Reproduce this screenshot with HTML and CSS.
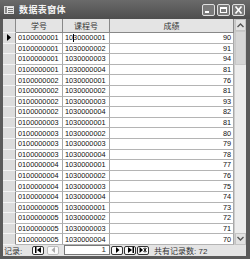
FILE: index.html
```html
<!DOCTYPE html>
<html lang="zh">
<head>
  <link rel="stylesheet" href="styles.css">
</head>
<body>
  <div class="window">
    <div class="titlebar">
      <svg class="app-icon" width="10" height="8" viewBox="0 0 10 8">
        <rect x="0.5" y="0.5" width="9" height="7" fill="#eee" stroke="#ddd"/>
        <rect x="1" y="1" width="2" height="6" fill="#888"/>
        <line x1="4" y1="2.5" x2="9" y2="2.5" stroke="#777"/>
        <line x1="4" y1="4.5" x2="9" y2="4.5" stroke="#777"/>
        <line x1="4" y1="6.5" x2="9" y2="6.5" stroke="#777"/>
      </svg>
      <span class="title">数据表窗体</span>
      <div class="title-btns">
        <span class="tbtn"><svg width="9" height="8" viewBox="0 0 9 8"><rect x="1" y="5" width="4" height="2" fill="#fff"/></svg></span>
        <span class="tbtn"><svg width="9" height="8" viewBox="0 0 9 8"><rect x="1.5" y="1.5" width="6" height="5" fill="none" stroke="#fff"/><rect x="1" y="1" width="7" height="2" fill="#fff"/></svg></span>
        <span class="tbtn"><svg width="9" height="8" viewBox="0 0 9 8"><path d="M1.5 0.5 L7.5 7.5 M7.5 0.5 L1.5 7.5" stroke="#fff" stroke-width="1.6"/></svg></span>
      </div>
    </div>

    <div class="frame">
      <div class="sheet">
        <div class="grid">
          <div class="cell sel head"></div>
          <div class="cell head">学号</div>
          <div class="cell head">课程号</div>
          <div class="cell head">成绩</div>

          <div class="cell sel"><svg width="4" height="7" viewBox="0 0 4 7"><path d="M0 0 L4 3.5 L0 7 Z" fill="#000"/></svg></div>
          <div class="cell">0100000001</div><div class="cell caret-cell">1030000001<span class="caret"></span></div><div class="cell num">90</div>
          <div class="cell sel"></div><div class="cell">0100000001</div><div class="cell">1030000002</div><div class="cell num">91</div>
          <div class="cell sel"></div><div class="cell">0100000001</div><div class="cell">1030000003</div><div class="cell num">94</div>
          <div class="cell sel"></div><div class="cell">0100000001</div><div class="cell">1030000004</div><div class="cell num">81</div>
          <div class="cell sel"></div><div class="cell">0100000002</div><div class="cell">1030000001</div><div class="cell num">76</div>
          <div class="cell sel"></div><div class="cell">0100000002</div><div class="cell">1030000002</div><div class="cell num">81</div>
          <div class="cell sel"></div><div class="cell">0100000002</div><div class="cell">1030000003</div><div class="cell num">93</div>
          <div class="cell sel"></div><div class="cell">0100000002</div><div class="cell">1030000004</div><div class="cell num">82</div>
          <div class="cell sel"></div><div class="cell">0100000003</div><div class="cell">1030000001</div><div class="cell num">81</div>
          <div class="cell sel"></div><div class="cell">0100000003</div><div class="cell">1030000002</div><div class="cell num">80</div>
          <div class="cell sel"></div><div class="cell">0100000003</div><div class="cell">1030000003</div><div class="cell num">79</div>
          <div class="cell sel"></div><div class="cell">0100000003</div><div class="cell">1030000004</div><div class="cell num">78</div>
          <div class="cell sel"></div><div class="cell">0100000004</div><div class="cell">1030000001</div><div class="cell num">77</div>
          <div class="cell sel"></div><div class="cell">0100000004</div><div class="cell">1030000002</div><div class="cell num">76</div>
          <div class="cell sel"></div><div class="cell">0100000004</div><div class="cell">1030000003</div><div class="cell num">75</div>
          <div class="cell sel"></div><div class="cell">0100000004</div><div class="cell">1030000004</div><div class="cell num">74</div>
          <div class="cell sel"></div><div class="cell">0100000005</div><div class="cell">1030000001</div><div class="cell num">73</div>
          <div class="cell sel"></div><div class="cell">0100000005</div><div class="cell">1030000002</div><div class="cell num">72</div>
          <div class="cell sel"></div><div class="cell">0100000005</div><div class="cell">1030000003</div><div class="cell num">71</div>
          <div class="cell sel"></div><div class="cell">0100000005</div><div class="cell">1030000004</div><div class="cell num">70</div>
        </div>

        <div class="scrollbar">
          <span class="sb-btn"><svg width="7" height="5" viewBox="0 0 7 5"><path d="M0.5 4 L3.5 1 L6.5 4" fill="none" stroke="#555" stroke-width="1.4"/></svg></span>
          <span class="sb-thumb"></span>
          <span class="sb-track"></span>
          <span class="sb-btn"><svg width="7" height="5" viewBox="0 0 7 5"><path d="M0.5 1 L3.5 4 L6.5 1" fill="none" stroke="#555" stroke-width="1.4"/></svg></span>
        </div>
      </div>

      <div class="navbar">
        <span class="nav-label">记录:</span>
        <span class="nbtn first"><svg width="7" height="6" viewBox="0 0 7 6"><rect x="0" y="0" width="1.5" height="6" fill="#000"/><path d="M6 0 L2 3 L6 6 Z" fill="#000"/></svg></span>
        <span class="nbtn off"><svg width="7" height="6" viewBox="0 0 7 6"><path d="M5 0 L1.5 3 L5 6 Z" fill="#aaa"/></svg></span>
        <span class="nbox">1</span>
        <span class="nbtn"><svg width="7" height="6" viewBox="0 0 7 6"><path d="M2 0 L5.5 3 L2 6 Z" fill="#000"/></svg></span>
        <span class="nbtn"><svg width="7" height="6" viewBox="0 0 7 6"><path d="M1 0 L5 3 L1 6 Z" fill="#000"/><rect x="5.5" y="0" width="1.5" height="6" fill="#000"/></svg></span>
        <span class="nbtn"><svg width="8" height="6" viewBox="0 0 8 6"><path d="M0.5 0 L4 3 L0.5 6 Z" fill="#000"/><path d="M4.5 1 L7.5 5 M7.5 1 L4.5 5 M6 0.5 L6 5.5" stroke="#000" stroke-width="0.8"/></svg></span>
        <span class="nav-total">共有记录数: 72</span>
      </div>
    </div>
  </div>
</body>
</html>
```

FILE: styles.css
```css
body {
  margin: 0;
  background: #fff;
  font-family: "Liberation Sans", "Noto Sans CJK SC", sans-serif;
  color: #111;
}

.window {
  width: 250px;
  background: #5a5a5a;
}

.titlebar {
  height: 19px;
  display: flex;
  align-items: center;
  padding: 0 5px 0 4px;
  background: linear-gradient(#6a6a6a, #4e4e4e);
}

.app-icon {
  margin-right: 5px;
  margin-top: 1px;
}

.title {
  color: #f4f4f4;
  font-size: 9px;
  font-weight: bold;
  letter-spacing: 0.4px;
}

.title-btns {
  margin-left: auto;
  display: flex;
  gap: 2px;
  margin-top: 1px;
}

.tbtn {
  width: 11px;
  height: 10px;
  border: 1px solid #e0e0e0;
  border-radius: 2px;
  background: #7a7a7a;
  display: flex;
  align-items: center;
  justify-content: center;
}

.frame {
  padding: 0 4px 3px 3px;
}

.sheet {
  display: flex;
  background: #fff;
}

.grid {
  display: grid;
  grid-template-columns: 13px 47px 47px 124px;
  grid-template-rows: 14px;
  grid-auto-rows: 10.6px;
  width: 231px;
}

.cell {
  box-sizing: border-box;
  border-right: 1px solid #a8a8a8;
  border-bottom: 1px solid #b4b4b4;
  font-size: 7.3px;
  color: #111;
  display: flex;
  align-items: center;
  padding-left: 2px;
  white-space: nowrap;
  overflow: hidden;
  position: relative;
}

.cell.head {
  background: #e4e4e4;
  border-right-color: #888;
  border-bottom-color: #888;
  justify-content: center;
  padding-left: 0;
  font-size: 8px;
  color: #333;
}

.cell.sel {
  background: #dcdcdc;
  border-right-color: #8a8a8a;
  border-bottom-color: #f4f4f4;
  justify-content: center;
  padding-left: 0;
}

.cell.num {
  justify-content: flex-end;
  padding-right: 2px;
}

.caret {
  position: absolute;
  left: 10px;
  top: 1px;
  width: 1px;
  height: 8px;
  background: #000;
}

.scrollbar {
  width: 12px;
  display: flex;
  flex-direction: column;
  background: #ececec;
  border-left: 1px solid #ccc;
  box-sizing: border-box;
}

.sb-btn {
  height: 12px;
  background: #e2e2e2;
  border: 1px solid #c4c4c4;
  box-sizing: border-box;
  display: flex;
  align-items: center;
  justify-content: center;
}

.sb-thumb {
  height: 34px;
  background: #d6d6d6;
  border: 1px solid #c8c8c8;
  box-sizing: border-box;
}

.sb-track {
  flex: 1;
}

.navbar {
  height: 11px;
  background: #e4e4e4;
  display: flex;
  align-items: center;
  font-size: 8px;
  color: #333;
}

.nav-label {
  margin-left: 1px;
  width: 28px;
}

.nbtn {
  width: 12px;
  height: 9px;
  box-sizing: border-box;
  border: 1px solid #333;
  border-radius: 2px;
  background: #fafafa;
  display: flex;
  align-items: center;
  justify-content: center;
  margin-right: 1px;
}

.nbtn.first {
  margin-right: 3px;
}

.nbtn.off {
  border-color: #bbb;
  margin-right: 5px;
}

.nbox {
  width: 46px;
  height: 10px;
  box-sizing: border-box;
  background: #fff;
  border: 1px solid #777;
  text-align: right;
  padding-right: 3px;
  line-height: 8px;
  margin-right: 1px;
}

.nav-total {
  margin-left: 4px;
}
```
